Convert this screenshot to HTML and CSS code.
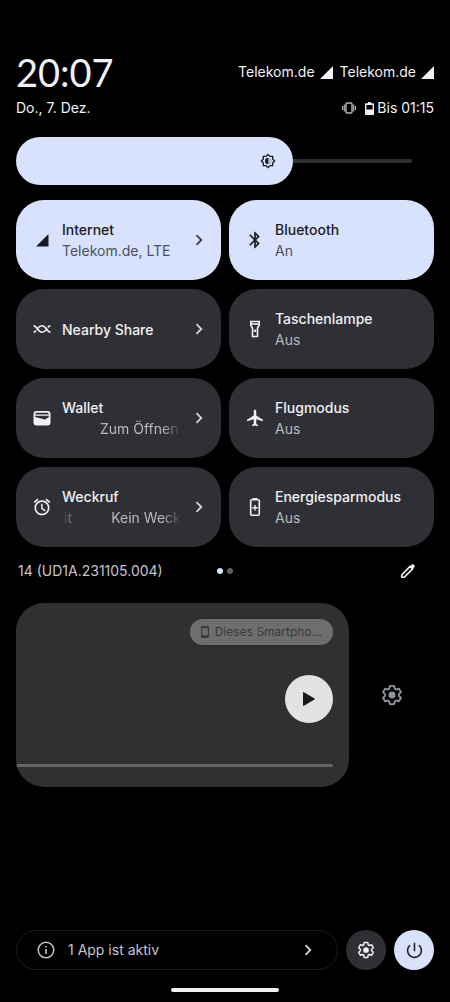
FILE: index.html
```html
<!DOCTYPE html>
<html lang="de">
<head>
<meta charset="utf-8">
<meta name="viewport" content="width=device-width, initial-scale=1">
<title>Schnelleinstellungen</title>
<link rel="stylesheet" href="styles.css">
</head>
<body>
<svg class="defs" aria-hidden="true">
  <symbol id="chevron" viewBox="0 0 16 16"><path d="M5.500 3.200 10.300 8l-4.800 4.800" fill="none" stroke="currentColor" stroke-width="1.800"/></symbol>
  <symbol id="signal" viewBox="0 0 14 14"><path d="M14 0v14H0z" fill="currentColor"/></symbol>
  <symbol id="gear" viewBox="0 0 24 24">
    <path fill="none" stroke="currentColor" stroke-width="2" stroke-linejoin="round" d="M19.430 12.980c.04-.32.07-.64.07-.98 0-.34-.03-.66-.07-.98l2.110-1.650c.19-.15.24-.42.12-.64l-2-3.460c-.09-.16-.26-.25-.44-.25-.06 0-.12.01-.17.03l-2.490 1c-.52-.4-1.080-.73-1.690-.98l-.38-2.650C14.460 2.180 14.250 2 14 2h-4c-.25 0-.46.18-.49.42l-.38 2.650c-.61.25-1.170.59-1.690.98l-2.490-1c-.06-.02-.12-.03-.18-.03-.17 0-.34.09-.43.25l-2 3.460c-.13.22-.07.49.12.64l2.110 1.650c-.04.32-.07.65-.07.98 0 .33.03.66.07.98l-2.110 1.650c-.19.15-.24.42-.12.64l2 3.460c.09.16.26.25.44.25.06 0 .12-.01.17-.03l2.490-1c.52.4 1.080.73 1.690.98l.38 2.650c.03.24.24.42.49.42h4c.25 0 .46-.18.49-.42l.38-2.650c.61-.25 1.170-.59 1.690-.98l2.490 1c.06.02.12.03.18.03.17 0 .34-.09.43-.25l2-3.460c.12-.22.07-.49-.12-.64z"/>
    <circle cx="12" cy="12" r="3.800" fill="currentColor"/>
  </symbol>
</svg>
<main class="shade">
  <header class="status">
    <div class="status-row">
      <time class="clock">20:07</time>
      <div class="carriers">
        <span class="carrier">Telekom.de <svg class="bars"><use href="#signal"/></svg></span>
        <span class="carrier">Telekom.de <svg class="bars"><use href="#signal"/></svg></span>
      </div>
    </div>
    <div class="status-row small">
      <span>Do., 7. Dez.</span>
      <div class="system">
        <svg class="vibrate" viewBox="0 0 14 12" aria-label="Vibrieren"><rect x="4" y="1" width="6" height="10" rx="1" fill="none" stroke="currentColor" stroke-width="1.400"/><path d="M2.300 2.500v7M11.700 2.500v7M.6 4v4M13.400 4v4" stroke="currentColor" stroke-width="1.100"/></svg>
        <span class="battery"><svg class="cell" viewBox="0 0 9 13" aria-hidden="true"><path d="M3 0h3v1.300h2.200q.8 0 .8.800v10.100q0 .8-.8.800H.8q-.8 0-.8-.8V2.100q0-.8.8-.8H3z" fill="currentColor"/><path d="M1.400 3h6.200v4.500H1.400z" fill="#000"/></svg>Bis 01:15</span>
      </div>
    </div>
  </header>

  <div class="brightness">
    <div class="level">
      <svg class="sun" viewBox="0 0 24 24" aria-hidden="true"><path fill="currentColor" d="M20 8.690V4h-4.690L12 .69 8.690 4H4v4.690L.69 12 4 15.310V20h4.690L12 23.310 15.310 20H20v-4.690L23.310 12zM18 14.480V18h-3.520L12 20.480 9.520 18H6v-3.520L3.520 12 6 9.520V6h3.520L12 3.520 14.480 6H18v3.520L20.480 12z" fill-rule="evenodd"/><path d="M12.500 7a5 5 0 0 0 0 10z" fill="currentColor"/><path d="M12.500 7a5 5 0 0 1 0 10z" fill="currentColor" opacity=".2"/></svg>
    </div>
    <div class="rest"></div>
    <input type="range" min="0" max="100" value="70" aria-label="Helligkeit">
  </div>

  <section class="tiles">
    <button class="tile on">
      <svg class="icon" viewBox="0 0 20 20"><path d="M16.500 4v12.500H4z" fill="currentColor"/></svg>
      <span class="label"><span class="name">Internet</span><span class="state">Telekom.de, LTE</span></span>
      <svg class="chevron"><use href="#chevron"/></svg>
    </button>
    <button class="tile on">
      <svg class="icon" viewBox="0 0 24 24"><path fill="currentColor" d="M17.710 7.710L12 2h-1v7.590L6.410 5 5 6.410 10.590 12 5 17.590 6.410 19 11 14.410V22h1l5.710-5.710-4.300-4.290zM13 5.830l1.880 1.880L13 9.590zM14.880 16.290L13 18.170v-3.760z"/></svg>
      <span class="label"><span class="name">Bluetooth</span><span class="state">An</span></span>
    </button>
    <button class="tile">
      <svg class="icon" viewBox="0 0 20 20"><g fill="none" stroke="currentColor" stroke-width="1.600" stroke-linecap="round"><path d="M2.200 6.900C5.200 7.600 6 13.200 10 13.200c2.600 0 3.600-1.700 4.700-3"/><path d="M5.300 9.800c1.100-1.300 2.100-3 4.700-3 4 0 4.800 5.600 7.800 6.300"/><path d="M2.200 13.100 3.700 12M16.300 8l1.500-1.100"/></g></svg>
      <span class="label"><span class="name">Nearby Share</span></span>
      <svg class="chevron"><use href="#chevron"/></svg>
    </button>
    <button class="tile">
      <svg class="icon" viewBox="0 0 24 24"><path fill="currentColor" fill-rule="evenodd" d="M18 2H6v6l2 3v11h8V11l2-3zM16 4v1H8V4zM14 10.400V20h-4v-9.600L8 7.400V7h8v.39z"/><circle cx="12" cy="14" r="1.500" fill="currentColor"/></svg>
      <span class="label"><span class="name">Taschenlampe</span><span class="state">Aus</span></span>
    </button>
    <button class="tile">
      <svg class="icon" viewBox="0 0 20 20"><path fill="currentColor" fill-rule="evenodd" d="M4.500 3h11Q18.500 3 18.500 6v8.500q0 3-3 3h-11q-3 0-3-3V6q0-3 3-3zM3.200 6.500h13.600q0-1.800-1.300-1.800h-11q-1.300 0-1.300 1.800zM3.200 7.800v1.200l9.500 2.400q.8.200 1.300-.3l2.800-2V7.800z"/></svg>
      <span class="label"><span class="name">Wallet</span><span class="state marquee first"><span>Zum Öffnen</span></span></span>
      <svg class="chevron"><use href="#chevron"/></svg>
    </button>
    <button class="tile">
      <svg class="icon" viewBox="0 0 23 24"><path fill="currentColor" d="M21 16v-2l-8-5V3.500c0-.83-.67-1.500-1.500-1.500S10 2.670 10 3.500V9l-8 5v2l8-2.500V19l-2 1.500V22l3.500-1 3.500 1v-1.500L13 19v-5.500z"/></svg>
      <span class="label"><span class="name">Flugmodus</span><span class="state">Aus</span></span>
    </button>
    <button class="tile">
      <svg class="icon" viewBox="0 0 24 24"><path fill="currentColor" fill-rule="evenodd" d="M22 5.720l-4.600-3.860-1.290 1.530 4.600 3.860zM7.880 3.390L6.600 1.860 2 5.710l1.290 1.530zM12.700 8H11v6l4.200 3.300 1.200-1.300-3.700-2.900zM12 4c-4.970 0-9 4.030-9 9s4.020 9 9 9c4.970 0 9-4.030 9-9s-4.030-9-9-9zM12 20c-3.870 0-7-3.130-7-7s3.130-7 7-7 7 3.130 7 7-3.130 7-7 7z"/></svg>
      <span class="label"><span class="name">Weckruf</span><span class="state marquee both"><span>lt</span><span>Kein Weck</span></span></span>
      <svg class="chevron"><use href="#chevron"/></svg>
    </button>
    <button class="tile">
      <svg class="icon" viewBox="0 0 20 20"><rect x="5.700" y="2.800" width="8.600" height="15.400" rx="1.300" fill="none" stroke="currentColor" stroke-width="1.600"/><path d="M7.500 1h5v2h-5zM9.300 8h1.400v2.100h2v1.400h-2v2.100H9.300v-2.100h-2v-1.400h2z" fill="currentColor"/></svg>
      <span class="label"><span class="name">Energiesparmodus</span><span class="state">Aus</span></span>
    </button>
  </section>

  <div class="build">
    <span>14 (UD1A.231105.004)</span>
    <span class="dots"><i class="dot current"></i><i class="dot"></i></span>
    <button class="edit" aria-label="Kacheln bearbeiten"><svg class="pencil" viewBox="0 0 18 18"><path d="M2 16v-2.800L11.400 3.800l2.800 2.800L4.800 16z" fill="none" stroke="currentColor" stroke-width="1.900" stroke-linejoin="round"/><path d="M11 4.200 13.500 1.700q.9-.9 1.800 0l1 1q.9.900 0 1.800L13.800 7z" fill="currentColor"/></svg></button>
  </div>

  <section class="media">
    <div class="player">
      <button class="device"><svg class="phone" viewBox="0 0 8 12" aria-hidden="true"><path fill="currentColor" fill-rule="evenodd" d="M1 0h6q1 0 1 1v10q0 1-1 1H1q-1 0-1-1V1q0-1 1-1zM1.200 2.300v7h5.600v-7z"/></svg><span class="device-name">Dieses Smartpho...</span></button>
      <button class="play" aria-label="Wiedergabe"><svg class="triangle" viewBox="0 0 14 16"><path d="M1.500 1.500 12.500 8l-11 6.500z" fill="currentColor" stroke="currentColor" stroke-width="1" stroke-linejoin="round"/></svg></button>
      <div class="progress"></div>
    </div>
    <button class="media-settings" aria-label="Medieneinstellungen"><svg class="gear-large"><use href="#gear"/></svg></button>
  </section>

  <footer class="footer">
    <button class="active-apps">
      <svg class="info" viewBox="0 0 18 18" aria-hidden="true"><circle cx="9" cy="9" r="7.800" fill="none" stroke="currentColor" stroke-width="1.500"/><path d="M8.200 8h1.600v5H8.200zM8.200 5h1.600v1.600H8.200z" fill="currentColor"/></svg>
      <span class="active-text">1 App ist aktiv</span>
      <svg class="chevron"><use href="#chevron"/></svg>
    </button>
    <button class="round" aria-label="Einstellungen"><svg class="gear-small"><use href="#gear"/></svg></button>
    <button class="round power" aria-label="Ein/Aus"><svg class="power-icon" viewBox="2 2 20 20"><path fill="currentColor" d="M12.900 3h-1.800v10h1.800zM17.830 5.170l-1.300 1.300C18.100 7.800 19.200 9.810 19.200 12c0 3.970-3.230 7.200-7.200 7.200S4.800 15.970 4.800 12c0-2.190 1.100-4.200 2.670-5.530l-1.300-1.300C4.230 6.820 3 9.260 3 12c0 4.970 4.030 9 9 9s9-4.030 9-9c0-2.740-1.230-5.180-3.170-6.830z"/></svg></button>
  </footer>
  <div class="home"></div>
</main>
</body>
</html>
```
FILE: styles.css
```css
* { box-sizing: border-box; }
body {
  margin: 0;
  background: #000;
  color: #f1f0f6;
  font: 14px/20px Inter, Roboto, sans-serif;
}
button {
  margin: 0;
  padding: 0;
  border: 0;
  background: none;
  color: inherit;
  font: inherit;
  text-align: left;
}
svg { display: block; flex: none; }
.defs { position: absolute; width: 0; height: 0; }
.shade {
  display: flex;
  flex-direction: column;
  min-height: 100vh;
  padding: 52px 16px 10px;
}

.status-row { display: flex; justify-content: space-between; align-items: center; }
.clock { font: 38px/40px Lato, sans-serif; }
.status-row.small { margin-top: 6px; }
.carriers, .carrier, .system, .battery { display: flex; align-items: center; }
.carriers { gap: 7px; }
.carrier { gap: 5px; }
.bars { width: 13px; height: 13px; }
.system { gap: 9px; }
.battery { gap: 3px; }
.vibrate { width: 14px; height: 12px; color: #b8b8bc; }
.cell { width: 9px; height: 13px; }

.brightness {
  position: relative;
  display: flex;
  align-items: center;
  margin: 19px 22px 0 0;
}
.level {
  display: flex;
  align-items: center;
  justify-content: flex-end;
  width: 70%;
  height: 48px;
  padding-right: 17px;
  border-radius: 24px;
  background: #d9e2fd;
  color: #1a1b20;
}
.sun { width: 16px; height: 16px; }
.rest { flex: 1; height: 4px; border-radius: 0 2px 2px 0; background: #2f3035; }
.brightness input {
  position: absolute;
  inset: 0;
  width: 100%;
  height: 100%;
  margin: 0;
  opacity: 0;
}

.tiles {
  display: grid;
  grid-template-columns: 1fr 1fr;
  gap: 9px 8px;
  margin-top: 15px;
}
.tile {
  display: flex;
  align-items: center;
  gap: 10px;
  min-width: 0;
  min-height: 80px;
  padding: 0 14px 0 16px;
  border-radius: 28px;
  background: #2f3035;
}
.tile.on { background: #d9e2fd; color: #1a1b20; }
.icon { width: 20px; height: 20px; }
.label { display: flex; flex: 1; flex-direction: column; min-width: 0; }
.name { font-weight: 500; line-height: 21px; white-space: nowrap; }
.state { color: #b9b9bf; line-height: 21px; white-space: nowrap; }
.on .state { color: #4c505c; }
.chevron { width: 16px; height: 16px; color: #d5d5da; }
.on .chevron { color: #3a3d46; }
.marquee { display: flex; gap: 39px; overflow: hidden; }
.marquee.first {
  padding-left: 38px;
  mask-image: linear-gradient(to right, #000 85%, transparent);
}
.marquee.both {
  padding-left: 2px;
  mask-image: linear-gradient(to right, transparent, #000 15%, #000 85%, transparent);
}

.build {
  display: grid;
  grid-template-columns: 1fr auto 1fr;
  align-items: center;
  margin-top: 14px;
  padding: 0 2px;
  color: #c5c5cb;
}
.dots { display: flex; gap: 4px; }
.dot { width: 6px; height: 6px; border-radius: 50%; background: #5c5f68; }
.dot.current { background: #d9e2fd; }
.edit { justify-self: end; margin-right: 16px; color: #f1f0f6; }
.pencil { width: 16px; height: 16px; }

.media { display: flex; align-items: center; margin-top: 22px; }
.player {
  display: flex;
  flex: 1;
  flex-direction: column;
  align-items: flex-end;
  min-height: 184px;
  padding: 16px 16px 20px 0;
  border-radius: 28px;
  background: #303030;
  overflow: hidden;
}
.device {
  display: flex;
  align-items: center;
  gap: 6px;
  height: 26px;
  padding: 0 11px;
  border-radius: 13px;
  background: #6e6e6e;
  color: #3a3a3a;
  font-size: 12px;
}
.phone { width: 8px; height: 12px; }
.play {
  display: grid;
  place-items: center;
  width: 48px;
  height: 48px;
  margin-top: 30px;
  border-radius: 50%;
  background: #e2e2e2;
  color: #1b1b1b;
}
.triangle { width: 14px; height: 16px; }
.progress { width: 100%; height: 3px; margin-top: auto; border-radius: 0 2px 2px 0; background: #656363; }
.media-settings { display: grid; place-items: center; width: 85px; height: 48px; color: #8f939b; }
.gear-large { width: 22px; height: 22px; overflow: visible; }

.footer { display: flex; gap: 8px; margin-top: auto; }
.active-apps {
  display: flex;
  flex: 1;
  align-items: center;
  gap: 13px;
  height: 40px;
  padding: 0 21px 0 20px;
  border: 1px solid #1c1c20;
  border-radius: 20px;
  color: #c5c5cb;
}
.info { width: 18px; height: 18px; }
.active-text { flex: 1; }
.round {
  display: grid;
  place-items: center;
  width: 40px;
  height: 40px;
  border-radius: 50%;
  background: #2f3035;
}
.round.power { background: #d9e2fd; color: #1a1b20; }
.gear-small { width: 18px; height: 18px; overflow: visible; }
.power-icon { width: 17px; height: 17px; }
.home { align-self: center; width: 108px; height: 4px; margin-top: 18px; border-radius: 2px; background: #f0f0f0; }
```
